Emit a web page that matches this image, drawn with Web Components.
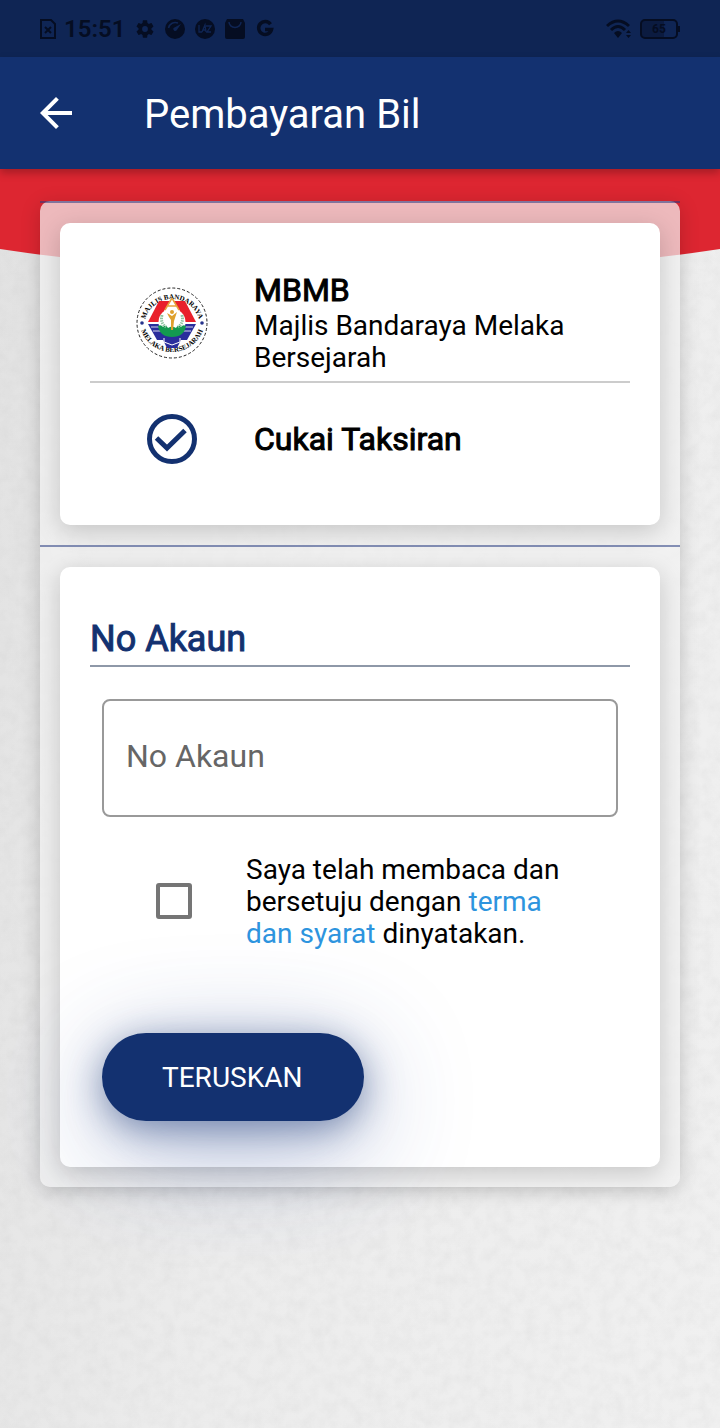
<!DOCTYPE html>
<html lang="ms">
<head>
<meta charset="utf-8">
<meta name="viewport" content="width=device-width, initial-scale=1">
<title>Pembayaran Bil</title>
<style>
  html, body { margin: 0; min-height: 100%; }
  body { font-family: Roboto, "Liberation Sans", sans-serif; color: #000; background: #e9e9e9; }
</style>
</head>
<body>
<bill-app>
  <status-bar slot="status"></status-bar>
  <app-bar slot="bar">Pembayaran Bil</app-bar>
  <glass-panel>
    <bill-card>
      <info-row variant="agency">
        <agency-crest slot="icon"></agency-crest>
        <strong slot="title">MBMB</strong>
        Majlis Bandaraya Melaka Bersejarah
      </info-row>
      <info-row variant="service">
        <check-mark slot="icon"></check-mark>
        <strong slot="title">Cukai Taksiran</strong>
      </info-row>
    </bill-card>
    <bill-card>
      <account-form></account-form>
    </bill-card>
  </glass-panel>
</bill-app>

<script>
const define = (name, html) => {
  const template = document.createElement('template');
  template.innerHTML = html;
  customElements.define(name, class extends HTMLElement {
    constructor() {
      super();
      this.attachShadow({ mode: 'open' }).append(template.content.cloneNode(true));
    }
  });
};

define('bill-app', `
  <style>
    :host { display: block; position: relative; isolation: isolate; min-height: 100vh; }
    .backdrop { position: absolute; inset: 0; z-index: -1; overflow: hidden;
      background: linear-gradient(100deg, #e1e1e1 0%, #ececec 45%, #f0f0f0 100%); }
    .backdrop svg { position: absolute; inset: 0; width: 100%; height: 100%; }
    .backdrop .ribbon { top: 168px; height: 100px; }
    main { padding: 32px 40px; }
  </style>
  <div class="backdrop">
    <svg aria-hidden="true">
      <filter id="plaster" x="0" y="0" width="100%" height="100%">
        <feTurbulence type="fractalNoise" baseFrequency="0.08" numOctaves="4" seed="4"/>
        <feColorMatrix values="0 0 0 0 .45  0 0 0 0 .45  0 0 0 0 .45  .5 0 0 0 -.17"/>
      </filter>
      <rect width="100%" height="100%" filter="url(#plaster)" opacity=".4"/>
    </svg>
    <svg class="ribbon" viewBox="0 0 720 100" preserveAspectRatio="none" aria-hidden="true">
      <path d="M0 0H720V81Q540 108 360 108T0 81Z" fill="#dd2631"/>
    </svg>
  </div>
  <slot name="status"></slot>
  <slot name="bar"></slot>
  <main><slot></slot></main>
`);

define('status-bar', `
  <style>
    :host { display: flex; align-items: center; height: 57px; padding: 0 40px;
      box-sizing: border-box; background: #0f2554; color: #050d22; }
    svg { display: block; flex: none; }
    time { font-size: 24px; font-weight: 600; }
    .left, .right { display: flex; align-items: center; }
    .left { flex: 1; gap: 10px; }
    .clock { display: flex; align-items: center; gap: 8px; width: 85px; white-space: nowrap; }
    .right { gap: 8px; }
    .battery { display: flex; align-items: center; }
    .level { box-sizing: border-box; width: 38px; height: 20px; border: 2px solid; border-radius: 5px;
      font-size: 12px; line-height: 16px; font-weight: 700; text-align: center;
      background: linear-gradient(90deg, #0b1b40 65%, transparent 65%); }
    .tip { width: 2px; height: 6px; background: currentColor; }
  </style>
  <div class="left">
    <div class="clock">
      <svg width="16" height="20" viewBox="0 0 16 20" fill="none" stroke="currentColor" stroke-width="2" aria-hidden="true"><path d="M1 1H11L15 5V19H1Z"/><path d="M5 8L11 14M11 8L5 14"/></svg>
      <time>15:51</time>
    </div>
    <svg width="20" height="20" viewBox="1 1 22 22" fill="currentColor" aria-hidden="true"><path fill-rule="evenodd" d="M19.100 12.900a7 7 0 0 0 0-1.800l2-1.600c.2-.1.2-.4.1-.6l-1.900-3.300c-.1-.2-.4-.3-.6-.2l-2.400 1a7 7 0 0 0-1.600-1L14.400 2.900c0-.2-.2-.4-.5-.4h-3.800c-.2 0-.4.2-.5.4l-.3 2.500a7 7 0 0 0-1.600 1l-2.400-1c-.2-.1-.5 0-.6.2L2.800 8.900c-.1.2-.1.5.1.6l2 1.600a7 7 0 0 0 0 1.800l-2 1.600c-.2.1-.2.4-.1.6l1.900 3.300c.1.2.4.3.6.2l2.400-1a7 7 0 0 0 1.600 1l.3 2.500c.1.2.3.4.5.4h3.800c.3 0 .5-.2.5-.4l.3-2.500a7 7 0 0 0 1.600-1l2.400 1c.2.1.5 0 .6-.2l1.900-3.300c.1-.2.1-.5-.1-.6ZM12 15.200a3.200 3.200 0 1 1 0-6.400 3.200 3.200 0 0 1 0 6.400Z"/></svg>
    <svg width="20" height="20" viewBox="0 0 20 20" aria-hidden="true"><circle cx="10" cy="10" r="10" fill="currentColor"/><path d="M3.500 9A7 7 0 0 1 13 4" fill="none" stroke="#0f2554" stroke-width="1.500"/><path d="M16 5L11.500 11.500A2 2 0 0 1 8.500 9Z" fill="#0f2554"/></svg>
    <svg width="20" height="20" viewBox="0 0 20 20" aria-hidden="true"><circle cx="10" cy="10" r="10" fill="currentColor"/><path d="M4 6V13H7M7 13L10 6L11 13M8 11H11M11 7H16L12 13H16" fill="none" stroke="#0f2554" stroke-width="1.300"/></svg>
    <svg width="20" height="20" viewBox="0 0 20 20" aria-hidden="true"><path d="M2 0H18L20 4V18Q20 20 18 20H2Q0 20 0 18V4Z" fill="currentColor"/><path d="M4 3A6 5.500 0 0 0 16 3" fill="none" stroke="#0f2554" stroke-width="1.500"/></svg>
    <svg width="20" height="20" viewBox="0 0 20 20" fill="none" stroke="currentColor" stroke-width="3.500" aria-hidden="true"><path d="M15.500 5.300A6.500 6.500 0 1 0 16.500 10.500H10"/></svg>
  </div>
  <div class="right">
    <svg width="26" height="20" viewBox="0 0 26 20" fill="none" stroke="currentColor" stroke-width="3" aria-hidden="true"><path d="M1 7Q12-3 23 7M5 11Q12 4 19 11"/><path d="M8 14Q12 10 16 14L12 19Z" fill="currentColor" stroke="none"/><path d="M20 14L22.500 11L25 14ZM20 16L22.500 19L25 16Z" fill="currentColor" stroke="none"/></svg>
    <div class="battery"><div class="level">65</div><div class="tip"></div></div>
  </div>
`);

define('app-bar', `
  <style>
    :host { display: block; background: #133170; color: #fff; box-shadow: 0 4px 8px rgba(0,0,0,.25); }
    header { display: flex; align-items: center; gap: 64px; height: 112px; padding: 0 32px; }
    button { display: block; width: 48px; height: 48px; padding: 0; border: 0; background: none; color: inherit; }
    svg { display: block; width: 48px; height: 48px; }
    h1 { margin: 0; padding-top: 4px; font-size: 40px; line-height: 48px; font-weight: 400; }
  </style>
  <header>
    <button type="button" aria-label="Kembali">
      <svg viewBox="0 0 24 24" fill="currentColor" aria-hidden="true"><path d="M20 11H7.830l5.590-5.590L12 4l-8 8 8 8 1.410-1.410L7.830 13H20v-2z"/></svg>
    </button>
    <h1><slot></slot></h1>
  </header>
`);

define('glass-panel', `
  <style>
    :host { display: block; border-radius: 10px; background: rgba(242,242,242,.72);
      box-shadow: 0 4px 20px rgba(0,0,0,.18); }
  </style>
  <slot></slot>
`);

define('bill-card', `
  <style>
    :host { display: block; padding: 20px; border-top: 2px solid rgba(40,60,130,.55); }
    article { padding: 30px; border-radius: 10px; background: #fff; box-shadow: 0 6px 24px rgba(0,0,0,.18); }
  </style>
  <article><slot></slot></article>
`);

define('info-row', `
  <style>
    :host { display: grid; grid-template-columns: 164px 1fr; align-items: center; }
    :host([variant="agency"]) { padding: 19px 0 7px; border-bottom: 2px solid #ccc; }
    :host([variant="agency"]) .text { padding-top: 2px; }
    :host([variant="service"]) { min-height: 112px; }
    .icon { display: grid; place-items: center; }
    .title { font-size: 32px; line-height: 36px; }
    ::slotted(strong) { font-weight: 400; -webkit-text-stroke: 1px currentColor; }
    .text { font-size: 28px; line-height: 32px; }
  </style>
  <div class="icon"><slot name="icon"></slot></div>
  <div>
    <div class="title"><slot name="title"></slot></div>
    <div class="text"><slot></slot></div>
  </div>
`);

define('check-mark', `
  <style>:host { display: block; color: #133170; } svg { display: block; }</style>
  <svg width="50" height="50" viewBox="0 0 50 50" fill="none" stroke="currentColor" aria-hidden="true">
    <circle cx="25" cy="25" r="22.500" stroke-width="5"/><path d="M9.500 24L20 34L38 16.500" stroke-width="5"/>
  </svg>
`);

define('agency-crest', `
  <style>:host { display: block; } svg { display: block; overflow: visible; } text { font: 700 7px "Liberation Serif", serif; }</style>
  <svg width="72" height="72" viewBox="-36 -36 72 72" role="img" aria-label="Lambang MBMB">
    <defs><path id="upper" d="M-28 4A28 28 0 1 1 28 4"/><path id="lower" d="M-33-4A33 33 0 1 0 33-4"/></defs>
    <circle r="35" fill="#fff" stroke="#222" stroke-width="1" stroke-dasharray="3 2"/>
    <text text-anchor="middle"><textPath href="#upper" startOffset="50%">MAJLIS BANDARAYA</textPath></text>
    <text text-anchor="middle"><textPath href="#lower" startOffset="50%">MELAKA BERSEJARAH</textPath></text>
    <circle cx="-30" cy="0" r="1.800" fill="#26338c"/><circle cx="30" cy="0" r="1.800" fill="#26338c"/>
    <path d="M-13-22H13L24-1H-24Z" fill="#e9202b"/>
    <path d="M-24 1H24L15 17H9L5 25H-5L-9 17H-15Z" fill="#2a2d9c"/>
    <path d="M-21 4H21M-19 8H19" stroke="#fff" stroke-width=".8"/>
    <path d="M-8 15V19L0 22L8 19V15" fill="none" stroke="#fff"/>
    <circle cy="-1" r="13.500" fill="#fff"/><path d="M-8-12L0-24L8-12Z" fill="#fff"/>
    <path d="M0-25L-7-13M0-25L7-13M-5-17H5" fill="none" stroke="#e8a33c" stroke-width="1.500"/>
    <path d="M-14 3Q-11 1-9 4Q-6 1-4 5Q0 2 4 5Q6 1 9 4Q11 1 14 3Q12 14 0 14Q-12 14-14 3Z" fill="#139a50"/>
    <path d="M-10-8Q-12 0-6 4M10-8Q12 0 6 4" fill="none" stroke="#8fc3a0" stroke-width="3" stroke-dasharray="1.500 1"/>
    <path d="M-5-10L0-7L5-11L3-5L2-2L1 7H-1V-3L-3-6Z" fill="#dfa02d"/><circle cx="0" cy="-11" r="2" fill="#dfa02d"/>
  </svg>
`);

define('account-form', `
  <style>
    :host { display: block; }
    h2 { margin: 0; padding: 20px 0 4px; border-bottom: 2px solid #8e98a8; color: #133170;
      font-size: 36px; line-height: 44px; font-weight: 400; -webkit-text-stroke: 1px currentColor; }
    form { padding: 32px 12px 16px; }
    input[type="text"] { display: block; box-sizing: border-box; width: 100%; height: 118px; padding: 0 22px 4px;
      border: 2px solid #999; border-radius: 8px; background: none; font: 400 32px Roboto, "Liberation Sans", sans-serif; color: #000; }
    input::placeholder { color: #666; opacity: 1; }
    .terms { display: grid; grid-template-columns: 144px 1fr; align-items: center; padding: 35px 36px 0 0; }
    input[type="checkbox"] { appearance: none; justify-self: center; box-sizing: border-box; width: 36px; height: 36px; margin: 0;
      border: 4px solid #757575; border-radius: 3px; }
    input[type="checkbox"]:checked { background: #133170; border-color: #133170; }
    .terms label { padding-top: 2px; font-size: 28px; line-height: 32px; }
    a { color: #2d94de; text-decoration: none; }
    .submit { display: block; height: 88px; margin-top: 83px; padding: 0 62px 0 60px; border: 0; border-radius: 44px;
      background: #133170; color: #fff; font: 400 28px Roboto, "Liberation Sans", sans-serif;
      box-shadow: 0 8px 36px rgba(19,49,112,.5), 0 24px 112px rgba(40,70,150,.4); }
  </style>
  <h2><label for="account">No Akaun</label></h2>
  <form>
    <input type="text" id="account" placeholder="No Akaun">
    <div class="terms">
      <input type="checkbox" id="agree">
      <label for="agree">Saya telah membaca dan bersetuju dengan <a href="#terma">terma dan syarat</a> dinyatakan.</label>
    </div>
    <button class="submit" type="button">TERUSKAN</button>
  </form>
`);
</script>
</body>
</html>
